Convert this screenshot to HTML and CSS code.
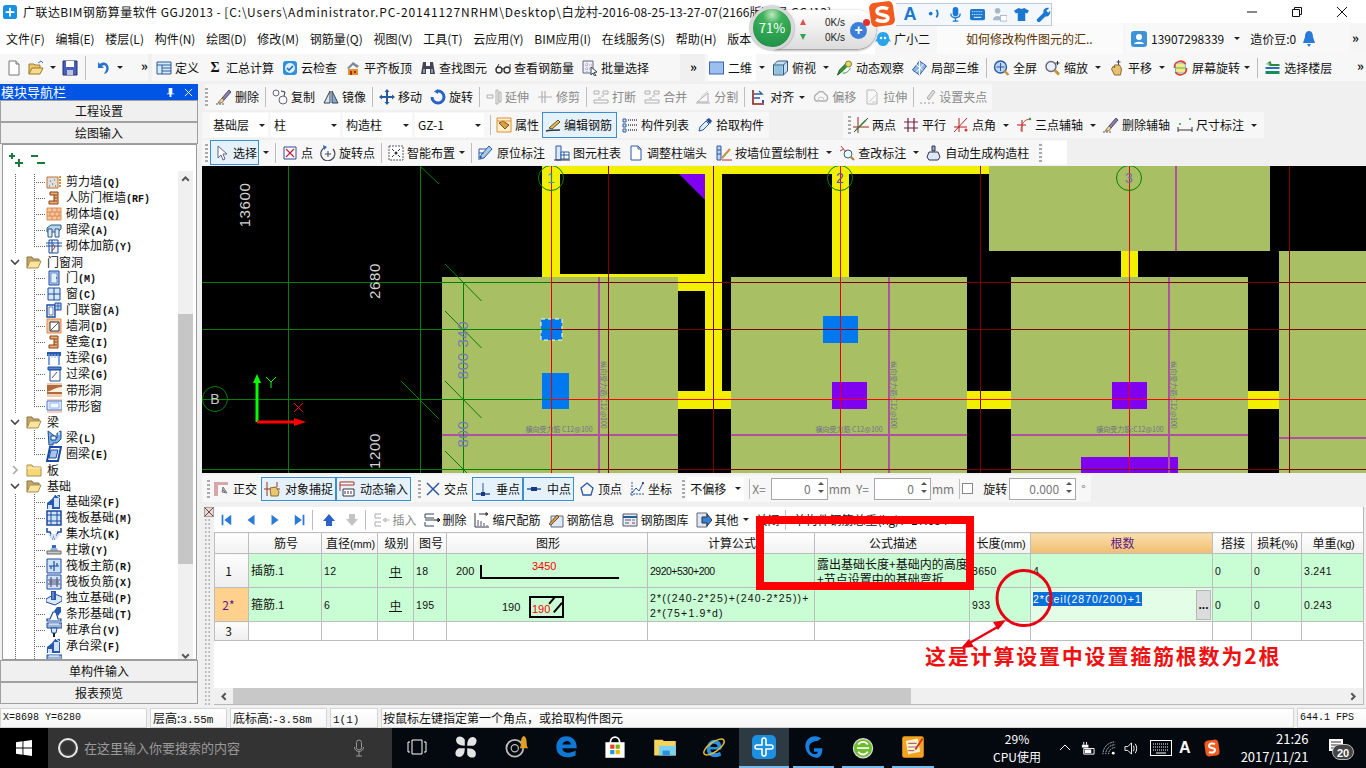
FILE: index.html
```html
<!DOCTYPE html>
<html lang="zh-CN">
<head>
<meta charset="utf-8">
<title>广联达BIM钢筋算量软件 GGJ2013</title>
<link rel="stylesheet" href="styles.css">
</head>
<body>
<svg class="defs" width="0" height="0">
<defs>
<symbol id="doc" viewBox="0 0 16 16"><path d="M3 1h7l3 3v11H3z" fill="#fff" stroke="#777"/><path d="M10 1v3h3" fill="#ddd" stroke="#777"/></symbol>
<symbol id="open" viewBox="0 0 16 16"><path d="M1 14V4h5l1 1h5v3" fill="#e8c878" stroke="#a07820"/><path d="M1 14l3-6h11l-3 6z" fill="#f6dc90" stroke="#a07820"/><path d="M10 3l3-2 2 2" fill="none" stroke="#3a70c0"/></symbol>
<symbol id="save" viewBox="0 0 16 16"><path d="M1 1h14v14H1z" fill="#4a5fb8" stroke="#223070"/><path d="M4 1h8v6H4z" fill="#fff"/><path d="M5 10h6v5H5z" fill="#bcc4e0"/></symbol>
<symbol id="undo" viewBox="0 0 16 16"><path d="M3 2v6h6L7 6c3-2 5 1 4 4l-2 4c5-1 6-7 3-10-2-2-5-2-7 0z" fill="#2a72d0"/></symbol>
<symbol id="def" viewBox="0 0 16 16"><path d="M1 2h14v12H1z" fill="#dbe8f6" stroke="#25609a"/><path d="M1 5h14M6 5v9M6 8h9M6 11h9" stroke="#25609a"/></symbol>
<symbol id="cloud" viewBox="0 0 16 16"><rect x="1" y="1" width="14" height="14" rx="3" fill="#2f8fe0"/><circle cx="8" cy="8" r="5" fill="#dcefff"/><path d="M5 8l2 2 4-4" fill="none" stroke="#1d6fc0" stroke-width="1.6"/></symbol>
<symbol id="flat" viewBox="0 0 16 16"><path d="M2 8l6-6 6 4-2 2-4-3-4 4z" fill="#7a8a9a"/><path d="M3 9h10v6H3z" fill="#e89030"/><path d="M5 11h2v4H5zM9 11h2v2H9z" fill="#a03010"/></symbol>
<symbol id="binoc" viewBox="0 0 16 16"><path d="M3 2h3v4h4V2h3l2 12h-5V9H6v5H1z" fill="#445"/><path d="M3 9h2v4H3zM11 9h2v4h-2z" fill="#89a"/></symbol>
<symbol id="glasses" viewBox="0 0 16 16"><circle cx="4" cy="10" r="3" fill="none" stroke="#333" stroke-width="1.4"/><circle cx="12" cy="10" r="3" fill="none" stroke="#333" stroke-width="1.4"/><path d="M1 9l3-5M7 9c.6-.6 1.4-.6 2 0M15 9V4" fill="none" stroke="#333"/></symbol>
<symbol id="batch" viewBox="0 0 16 16"><path d="M1 1h10v12H1z" fill="#eef" stroke="#667"/><path d="M1 5h10M1 9h10M5 1v12" stroke="#99a" stroke-dasharray="1 1"/><path d="M9 7l6 5-3 .5 2 3-1.500 .5-1.500-3-2 2z" fill="#fff" stroke="#345"/></symbol>
<symbol id="v2d" viewBox="0 0 16 16"><rect x="1" y="2" width="14" height="12" fill="#9dbfee" stroke="#3766b8"/></symbol>
<symbol id="top" viewBox="0 0 16 16"><path d="M1 5l4-4h10v10l-4 4H1z" fill="#c8e0f0" stroke="#2a5a80"/><path d="M1 5h10v10M11 5l4-4" fill="none" stroke="#2a5a80"/><path d="M2 6h8v8H2z" fill="#8fc0e0"/></symbol>
<symbol id="orbit" viewBox="0 0 16 16"><path d="M1 15l4-3 7-7-2-2-7 7z" fill="#3a9a30" stroke="#1a5a20"/><circle cx="12" cy="4" r="3" fill="#e8e040" stroke="#777"/><path d="M6 13c4 1 7-3 8-5" fill="none" stroke="#3a9a30"/></symbol>
<symbol id="local3d" viewBox="0 0 16 16"><path d="M8 1l7 5-7 9-7-5z" fill="#8fb6e8" stroke="#2a5aa0"/><path d="M4 4l7 6M8 1v14M12 4l-7 8" stroke="#fff"/></symbol>
<symbol id="zoomall" viewBox="0 0 16 16"><circle cx="7" cy="7" r="6" fill="#bcd4f0" stroke="#2a5aa0" stroke-width="1.4"/><path d="M7 3v8M3 7h8" stroke="#2a5aa0"/><path d="M11 11l4 4" stroke="#d09030" stroke-width="2.400"/></symbol>
<symbol id="mag" viewBox="0 0 16 16"><circle cx="6.500" cy="6.500" r="5" fill="#e8f0fa" stroke="#667" stroke-width="1.400"/><path d="M10.500 10.500l4 4" stroke="#c09030" stroke-width="2.600"/><path d="M13 1v4M11 3h4" stroke="#333"/></symbol>
<symbol id="hand" viewBox="0 0 16 16"><path d="M3 9l2-3 1 2V5h5l2 4-1 6H6z" fill="#e8c070" stroke="#8a6a30"/><path d="M10 0v5M8 2h4" stroke="#445"/></symbol>
<symbol id="rot" viewBox="0 0 16 16"><rect x="3" y="3" width="10" height="10" fill="#f4e880" stroke="#7ab0e0"/><path d="M3 8h10" stroke="#50b070"/><path d="M2 8a6 6 0 0 1 11-4M14 8a6 6 0 0 1-11 4" fill="none" stroke="#e04030" stroke-width="1.500"/></symbol>
<symbol id="layers" viewBox="0 0 16 16"><path d="M6 1L1 4l5 2h9V4H7z" fill="#2a8a3a"/><path d="M1 7h14v2H1z" fill="#2a70c0"/><path d="M1 11h14v3H1z" fill="#1a8a60"/><path d="M1 4h4" stroke="#fff"/></symbol>
<symbol id="brush" viewBox="0 0 16 16"><path d="M6 9l7-8 2 2-7 8z" fill="#8a78c8" stroke="#554"/><path d="M6 9l2 2c-1 3-4 3-6 3 1-1 2-3 4-5z" fill="#e8d890" stroke="#865"/><path d="M0 15h9" stroke="#555" stroke-dasharray="2 1"/></symbol>
<symbol id="copy" viewBox="0 0 16 16"><circle cx="4" cy="4" r="3" fill="none" stroke="#667"/><circle cx="11" cy="11" r="4" fill="none" stroke="#667"/><path d="M9 2l4 1-1 4" fill="none" stroke="#334"/></symbol>
<symbol id="mirror" viewBox="0 0 16 16"><path d="M7 2v12H1z" fill="#d8e4f0" stroke="#345"/><path d="M9 2v12h6z" fill="#8aa8d0" stroke="#345"/></symbol>
<symbol id="move" viewBox="0 0 16 16"><path d="M8 0l2.500 3H9v4h4V5.500L16 8l-3 2.500V9H9v4h1.500L8 16l-2.500-3H7V9H3v1.500L0 8l3-2.500V7h4V3H5.500z" fill="#2a5aa0"/></symbol>
<symbol id="rotcw" viewBox="0 0 16 16"><path d="M8 2a6 6 0 1 1-6 6" fill="none" stroke="#2a62c8" stroke-width="3"/><path d="M8 0v5l-4-2.500z" fill="#2a62c8"/></symbol>
<symbol id="g1" viewBox="0 0 16 16"><path d="M1 6h6v3H1zM10 1h2v14h-2zM13 3h2v10h-2z" fill="none" stroke="#b0b0b0"/></symbol>
<symbol id="g2" viewBox="0 0 16 16"><path d="M1 8h14M8 2v12M5 2v12" fill="none" stroke="#b0b0b0" stroke-width="1.200"/></symbol>
<symbol id="g3" viewBox="0 0 16 16"><path d="M1 2h5v3H1zM10 2h5v3h-5zM1 11h14v3H1zM8 7h3M8 9H5" fill="none" stroke="#b0b0b0"/></symbol>
<symbol id="g4" viewBox="0 0 16 16"><path d="M2 13l11-9v9zM1 14h14" fill="none" stroke="#b0b0b0"/><path d="M6 8l7-6" stroke="#ccc"/></symbol>
<symbol id="align" viewBox="0 0 16 16"><path d="M2 1v14h11" fill="none" stroke="#902020" stroke-width="1.600"/><path d="M3 5h8l-3-3M3 9h6" fill="none" stroke="#2a5aa0" stroke-width="1.400"/><path d="M11 11h2v3h-2z" fill="#2a5aa0"/></symbol>
<symbol id="goff" viewBox="0 0 16 16"><path d="M3 12a4 4 0 0 1 1-7 4.500 4.500 0 0 1 8 0 4 4 0 0 1 1 7z" fill="none" stroke="#b0b0b0" stroke-width="1.400"/><path d="M5 11a3 3 0 0 1 6 0" fill="none" stroke="#c8c8c8"/></symbol>
<symbol id="gstr" viewBox="0 0 16 16"><path d="M3 1h7l3 3v11H3z" fill="#f8f8f8" stroke="#b8b8b8"/><path d="M5 13l7-7M8 13h5" stroke="#ccc"/></symbol>
<symbol id="ggrip" viewBox="0 0 16 16"><path d="M7 9l6-8 2 2-6 8z" fill="#ddd" stroke="#aaa"/><path d="M0 14h2M4 14h2M8 14h2M12 14h2" stroke="#999"/></symbol>
<symbol id="prop" viewBox="0 0 16 16"><path d="M1 1h14v14H1z" fill="#fff0d0" stroke="#e09030"/><path d="M3 6l4-2 6 4-4 4z" fill="#d8a040" stroke="#805020"/><path d="M1 4h14" stroke="#e09030"/></symbol>
<symbol id="edit" viewBox="0 0 16 16"><path d="M1 14c4-1 9-1 14-1" stroke="#333" stroke-width="1.500" fill="none"/><path d="M4 11l9-8 2 2-8 7z" fill="#e8b840" stroke="#554"/></symbol>
<symbol id="list" viewBox="0 0 16 16"><path d="M1 2h3v3H1zM1 7h3v3H1zM1 12h3v3H1z" fill="#dde8f8" stroke="#2a5aa0"/><path d="M6 3h9M6 8h9M6 13h9" stroke="#445" stroke-dasharray="1 1" stroke-width="1.600"/></symbol>
<symbol id="pick" viewBox="0 0 16 16"><path d="M2 14l1-4 6-6 3 3-6 6z" fill="#dfeefa" stroke="#2a5aa0"/><path d="M9 3l3-2 3 3-2 3z" fill="#2a4a9a"/></symbol>
<symbol id="twopts" viewBox="0 0 16 16"><path d="M1 15L15 1M5 0v16M0 10h16" stroke="#a02020" fill="none"/><path d="M3 13l10-10" stroke="#308030" stroke-width="1.600"/></symbol>
<symbol id="para" viewBox="0 0 16 16"><path d="M5 1v14M11 1v14M1 5h14M1 11h14" stroke="#702040" fill="none" stroke-width="1.200"/></symbol>
<symbol id="ang" viewBox="0 0 16 16"><path d="M1 15L14 1M6 1v14M1 10h13" stroke="#b02020" fill="none"/><circle cx="13" cy="13" r="1.500" fill="#e03030"/></symbol>
<symbol id="arc3" viewBox="0 0 16 16"><path d="M1 8h9M6 15V3" stroke="#a02020" fill="none"/><path d="M5 14c0-8 4-12 10-12" stroke="#e04030" fill="none"/><circle cx="14" cy="2" r="1.200" fill="#30a030"/></symbol>
<symbol id="dim" viewBox="0 0 16 16"><path d="M1 10v5M15 10v5M1 13h14" stroke="#333" fill="none"/><circle cx="3" cy="7" r="1" fill="#30a030"/><circle cx="13" cy="2" r="1" fill="#30a030"/></symbol>
<symbol id="cur" viewBox="0 0 16 16"><path d="M4 1v12l3-3 2 5 2-1-2-5h4z" fill="#fff" stroke="#667"/></symbol>
<symbol id="pt" viewBox="0 0 16 16"><path d="M2 2h12v12H2z" fill="#fff" stroke="#334a90"/><path d="M4 4l8 8M12 4l-8 8" stroke="#c02040" stroke-width="1.200"/></symbol>
<symbol id="rotpt" viewBox="0 0 16 16"><path d="M13 4a7 7 0 1 1-7-2" fill="none" stroke="#445" stroke-width="1.200"/><path d="M3 0l4 2-3 3z" fill="#2a62c8"/><path d="M8 6v6M5 9h6" stroke="#445"/></symbol>
<symbol id="smart" viewBox="0 0 16 16"><path d="M1 1h14v14H1z" fill="#fff" stroke="#556" stroke-dasharray="2 1"/><path d="M4 4l2 2M12 4l-2 2M4 12l2-2M12 12l-2-2" stroke="#333"/><circle cx="8" cy="8" r="1.500" fill="#234"/></symbol>
<symbol id="inplace" viewBox="0 0 16 16"><path d="M1 15V4h9" fill="none" stroke="#2a5aa0"/><path d="M2 14l1-4 8-9 3 3-8 9z" fill="#a8c8e8" stroke="#2a5aa0"/><path d="M1 8h5M1 12h3" stroke="#2a5aa0"/></symbol>
<symbol id="coltab" viewBox="0 0 16 16"><path d="M2 1h5v14H2z" fill="#dde8f8" stroke="#2a5aa0"/><path d="M7 7h8v7H7z" fill="#fff" stroke="#2a5aa0"/><path d="M7 10h8M10 7v7" stroke="#2a5aa0"/><path d="M0 15h16" stroke="#333"/></symbol>
<symbol id="adj" viewBox="0 0 16 16"><path d="M3 1h7l3 3v11H3z" fill="#fff" stroke="#2a5aa0"/><path d="M10 1v3h3" fill="none" stroke="#2a5aa0"/></symbol>
<symbol id="bywall" viewBox="0 0 16 16"><path d="M1 1h4v14H1z" fill="#c0d0f0" stroke="#2a5aa0"/><path d="M1 5h4M1 9h4" stroke="#2a5aa0"/><path d="M6 13l8-9" stroke="#c89040" stroke-width="2"/><path d="M6 15h10" stroke="#c02020"/></symbol>
<symbol id="chk" viewBox="0 0 16 16"><circle cx="9" cy="9" r="4" fill="#dff" stroke="#556"/><path d="M12 12l3 3" stroke="#b08030" stroke-width="2"/><path d="M2 1l5 6M1 6l4-2" stroke="#c04040"/></symbol>
<symbol id="auto" viewBox="0 0 16 16"><path d="M6 1h3v5H6z" fill="#8ab0e0" stroke="#334"/><path d="M3 7h9l2 5-2 3H3l-2-3z" fill="#dde8f8" stroke="#334"/></symbol>
<symbol id="ortho" viewBox="0 0 16 16"><path d="M0 1h14v3H4v11H0z" fill="#d8a8a8"/><path d="M8 8l4 4M9 6l4 6-5-1z" fill="#bbb" stroke="#778"/></symbol>
<symbol id="snap" viewBox="0 0 16 16"><path d="M3 1v14M13 1v5M0 8h16" stroke="#a03020" fill="none"/><path d="M6 7l6-1 3 5-1 4H7z" fill="#e8c870" stroke="#8a6a30"/></symbol>
<symbol id="dyn" viewBox="0 0 16 16"><path d="M1 1h14v3H1z" fill="#fff" stroke="#a03020"/><path d="M1 4v6" stroke="#a03020"/><path d="M4 8h11v7H4z" fill="#fff" stroke="#334"/><path d="M6 13v-3M9 13v-3M12 13v-3" stroke="#334"/></symbol>
<symbol id="cross" viewBox="0 0 16 16"><path d="M2 2l12 12M14 2L2 14" stroke="#2a5aa0" stroke-width="1.500"/></symbol>
<symbol id="perp" viewBox="0 0 16 16"><path d="M1 13h14" stroke="#2a5aa0" stroke-width="1.500"/><path d="M8 2v11" stroke="#2a5aa0"/><rect x="6" y="11" width="4" height="4" fill="#1a3a80"/></symbol>
<symbol id="mid" viewBox="0 0 16 16"><path d="M1 8h14" stroke="#2a5aa0" stroke-width="1.500"/><rect x="5" y="6" width="6" height="4" fill="#1a3a80"/></symbol>
<symbol id="vert" viewBox="0 0 16 16"><path d="M8 2l6 5-2 7H4L2 7z" fill="none" stroke="#2a5aa0" stroke-width="1.300"/></symbol>
<symbol id="coord" viewBox="0 0 16 16"><path d="M1 13h14M3 15V1" stroke="#2a5aa0" fill="none" stroke-dasharray="2 1"/><path d="M3 12l4-5 3 3 4-8" stroke="#2a5aa0" fill="none"/><circle cx="14" cy="2" r="1" fill="#223"/></symbol>
<symbol id="first" viewBox="0 0 16 16"><path d="M3 2h2v12H3zM14 2v12L6 8z" fill="#2a7ad8"/></symbol>
<symbol id="prev" viewBox="0 0 16 16"><path d="M12 2v12L4 8z" fill="#2a7ad8"/></symbol>
<symbol id="next" viewBox="0 0 16 16"><path d="M4 2v12l8-6z" fill="#2a7ad8"/></symbol>
<symbol id="last" viewBox="0 0 16 16"><path d="M11 2h2v12h-2zM2 2v12l8-6z" fill="#2a7ad8"/></symbol>
<symbol id="up" viewBox="0 0 16 16"><path d="M8 2l6 7h-3v5H5V9H2z" fill="#2a62c8"/></symbol>
<symbol id="dn" viewBox="0 0 16 16"><path d="M8 14l6-7h-3V2H5v5H2z" fill="#c4c4c4"/></symbol>
<symbol id="ins" viewBox="0 0 16 16"><path d="M1 2h6M1 2v4M1 10h6M1 10v4h6M1 6h6" stroke="#aaa" fill="none"/><path d="M9 8h7M9 8l3-2v4z" stroke="#bbb" fill="none"/></symbol>
<symbol id="del" viewBox="0 0 16 16"><path d="M1 2h9M1 8h9M1 14h9M1 2v4h9M1 10v4" stroke="#345" fill="none"/><path d="M10 8h6l-2-2v4l2-2" stroke="#111" fill="none"/></symbol>
<symbol id="scale" viewBox="0 0 16 16"><path d="M1 1v14h14" stroke="#334" fill="none"/><path d="M4 14V8M7 14V9M10 14v-3M13 14v-1" stroke="#556" fill="none"/><path d="M5 2h9l-2-1.500v3L14 2" stroke="#334" fill="none"/></symbol>
<symbol id="info" viewBox="0 0 16 16"><path d="M3 4h12v11H3z" fill="#dde8f8" stroke="#667"/><path d="M1 12l8-9 2 2-8 8z" fill="#d8a040" stroke="#654"/></symbol>
<symbol id="lib" viewBox="0 0 16 16"><path d="M1 2h14v12H1z" fill="#e8eef8" stroke="#556"/><path d="M1 5h14" stroke="#2a5aa0" stroke-width="2"/><path d="M3 8h6M3 11h4" stroke="#556"/><path d="M10 11h3" stroke="#c02020"/><path d="M10 8h3" stroke="#30a030"/></symbol>
<symbol id="other" viewBox="0 0 16 16"><path d="M1 1h10v14H1z" fill="#e0e6f0" stroke="#667"/><path d="M6 5h5V2l5 6-5 6v-3H6z" fill="#3a80d0" stroke="#234"/></symbol>
<symbol id="fopen" viewBox="0 0 16 16"><path d="M1 14V3h5l1 2h6v2" fill="#c8a868" stroke="#8a7040"/><path d="M1 14l3-7h11l-3 7z" fill="#f8e4a0" stroke="#a89050"/></symbol>
<symbol id="fold" viewBox="0 0 16 16"><path d="M1 3h5l1 2h8v9H1z" fill="#f6d878" stroke="#a89050"/><path d="M1 6h14" stroke="#fff3c0"/></symbol>
<symbol id="twall" viewBox="0 0 16 16"><path d="M1 3h11v11H1z" fill="#ddd" stroke="#c07030"/><path d="M3 12h1M6 10h1M9 12h1M4 7h1M8 6h1" stroke="#888" stroke-width="1.500"/><path d="M14 2v12" stroke="#e09030" stroke-dasharray="2 1" stroke-width="2"/></symbol>
<symbol id="tzj" viewBox="0 0 16 16"><path d="M4 2h8v12H3v-3h5V5H4z" fill="#e8b078" stroke="#904010"/><path d="M8 5h3M8 8h3M8 11h3" stroke="#904010"/></symbol>
<symbol id="tbrick" viewBox="0 0 16 16"><path d="M1 2h14v12H1z" fill="#f0c8a8" stroke="#e08848"/><path d="M1 6h14M1 10h14M6 2v4M11 2v4M4 6v4M9 6v4M13 6v4M6 10v4M11 10v4" stroke="#e08848"/></symbol>
<symbol id="tbeam" viewBox="0 0 16 16"><path d="M1 6l4-3h10v4l-3 3H1z" fill="#b8d4ec" stroke="#2a5a80"/><path d="M2 7h4v8H2zM9 7h4v8H9z" fill="#dfeaf4" stroke="#2a5a80"/></symbol>
<symbol id="taddb" viewBox="0 0 16 16"><path d="M3 2h9v13H3z" fill="#eef4fc" stroke="#1a4aa0"/><path d="M0 5h16M0 8h16M6 2v13" stroke="#1a4aa0"/><path d="M7 6l2 3-3 4" stroke="#a04020" fill="none"/></symbol>
<symbol id="tdoor" viewBox="0 0 16 16"><path d="M3 1h10v14H3z" fill="#b0ccf0" stroke="#1a4aa0"/><path d="M5 3h6v10H5z" fill="#e4effa" stroke="#1a4aa0" stroke-width=".5"/><path d="M10 8h1" stroke="#123"/></symbol>
<symbol id="twin" viewBox="0 0 16 16"><path d="M2 2h12v12H2z" fill="#d8e8fa" stroke="#1a4aa0"/><path d="M8 2v12M2 8h12" stroke="#1a4aa0"/></symbol>
<symbol id="tdw" viewBox="0 0 16 16"><path d="M1 3h8v12H1z" fill="#fff" stroke="#1a4aa0" stroke-width="1.400"/><path d="M9 1h6v7H9z" fill="#b8d0f0" stroke="#1a4aa0"/><path d="M12 1v7M9 4h6M3 5h4v8H3z" stroke="#1a4aa0" fill="none" stroke-width=".7"/></symbol>
<symbol id="thole" viewBox="0 0 16 16"><path d="M1 1h14v14H1z" fill="#f0c8a8" stroke="#e08848"/><path d="M4 4h9v9H4z" fill="#fff" stroke="#333"/><path d="M4 13l9-9" stroke="#555"/></symbol>
<symbol id="tlin" viewBox="0 0 16 16"><path d="M1 2h14v4H1z" fill="#2a5ab0"/><path d="M3 6v9M13 6v9" stroke="#7aa0e0" stroke-width="2"/><path d="M3 4v4M6 4v4M9 4v4M12 4v4" stroke="#9ab4e8"/></symbol>
<symbol id="tlin2" viewBox="0 0 16 16"><path d="M2 1h13v3H2z" fill="#5a88d0" stroke="#1a4aa0"/><path d="M4 4h10v11H4z" fill="#fff" stroke="#1a4aa0"/><path d="M6 12l5-6" stroke="#556"/></symbol>
<symbol id="tsh" viewBox="0 0 16 16"><path d="M1 1h15v14H1z" fill="#f0cdb0"/><path d="M1 3h15v9H1z" fill="#b06a40"/><path d="M1 10c5-2 10-5 15-5v5z" fill="#fff0e0"/></symbol>
<symbol id="tsw" viewBox="0 0 16 16"><path d="M1 1h15v14H1z" fill="#f5d0c0"/><path d="M1 3h15v9H1z" fill="#dde8fa" stroke="#4a7ad0"/><path d="M4 5h9v5H4z" fill="#f4f8ff" stroke="#9ab4e8"/></symbol>
<symbol id="tbl" viewBox="0 0 16 16"><path d="M2 1l9 7v-5l4-2v8l-4 4H7v2H3z" fill="#7ab0e4" stroke="#1a4a90"/><path d="M9 2l4 0v3" fill="none" stroke="#fff"/><path d="M5 6h5v4H5z" fill="#eaf4fc" stroke="#1a4a90"/></symbol>
<symbol id="tring" viewBox="0 0 16 16"><path d="M4 1h11l-3 14H1z" fill="#fff" stroke="#1a4aa0" stroke-width="2"/><path d="M5 4h7l-2 8H3z" fill="#a8c4ec" stroke="#1a4aa0"/></symbol>
<symbol id="tfb" viewBox="0 0 16 16"><path d="M1 15V9l5-4 3-4 5 0v14z" fill="#2a5ab0"/><path d="M8 4h5v9H8zM2 11h4v4H2z" fill="#cfe2f8"/><path d="M10 1l4 3" stroke="#fff"/></symbol>
<symbol id="traft" viewBox="0 0 16 16"><path d="M1 1h14v14H1z" fill="#cfe2f8" stroke="#1a4aa0" stroke-width="1.500"/><path d="M1 5h14M1 11h14M5 1v14M11 1v14" stroke="#1a4aa0"/></symbol>
<symbol id="tpit" viewBox="0 0 16 16"><path d="M1 2v4h3l2 5h4l2-5h3V2" fill="none" stroke="#1a4aa0" stroke-width="1.500"/><path d="M2 8c2 3 3 6 6 6s4-3 6-6" fill="#cfe2f8"/><path d="M4 9h1M7 11h1M10 9h1M6 13h3" stroke="#557" stroke-dasharray="1 1"/></symbol>
<symbol id="tpier" viewBox="0 0 16 16"><path d="M6 3h4v3H6z" fill="#3a6ac0"/><path d="M5 6h6l1 3H4z" fill="#9ab4d8"/><path d="M1 9h14v3H1z" fill="#c8c8c8" stroke="#666"/></symbol>
<symbol id="trm" viewBox="0 0 16 16"><path d="M1 1h14v14H1z" fill="#cfe2f8" stroke="#1a4aa0"/><path d="M8 3v10M3 8h10M5 8v3M11 8V5" stroke="#1a4aa0" stroke-width="1.200"/></symbol>
<symbol id="trn" viewBox="0 0 16 16"><path d="M1 1h14v14H1z" fill="#cfe2f8" stroke="#1a4aa0"/><path d="M2 6h12M2 10h12M5 3v10M11 3v10M3 8h10" stroke="#557" stroke-width="1.200"/></symbol>
<symbol id="tind" viewBox="0 0 16 16"><path d="M0 9l9-5 7 3v4l-7 4-9-3z" fill="#dbe8f8" stroke="#1a4aa0"/><path d="M5 1h5v9H5z" fill="#2a5ab0"/><path d="M7 2v7" stroke="#9ab4e8"/></symbol>
<symbol id="tstr" viewBox="0 0 16 16"><path d="M7 6h3l2 7h3v2H1v-2h3z" fill="#fff" stroke="#1a4aa0" stroke-width="1.200"/><path d="M8 5l3-4 4 0v5l-3 4z" fill="#2a5ab0"/></symbol>
<symbol id="tpile" viewBox="0 0 16 16"><path d="M1 1h15v5H1z" fill="#9ab4d8" stroke="#1a4aa0"/><path d="M3 2h10" stroke="#fff"/><path d="M5 6h6l-1 5H6z" fill="#dbe8f8" stroke="#1a4aa0"/><path d="M7 11h2v4H7z" fill="#123"/></symbol>
<symbol id="plus2" viewBox="0 0 16 16"><path d="M1 4h2V2h2v2h2v2H5v2H3V6H1z" fill="#1a7a3a"/><path d="M7 11h3V8h2v3h3v2h-3v3h-2v-3H7z" fill="#1a7a3a"/></symbol>
<symbol id="minus2" viewBox="0 0 16 16"><path d="M1 4h7v2H1zM7 11h8v2H7z" fill="#1a7a3a"/></symbol>
</defs>
</svg>

<div class="app">
  <header class="title">
    <svg class="logo" viewBox="0 0 16 16"><rect width="16" height="16" rx="3" fill="#1b8fe0"/><path d="M7 3h2v4h4v2H9v4H7V9H3V7h4z" fill="#fff"/></svg>
    <span class="title-text"><span class="t-pre">广联达BIM钢筋算量软件 GGJ2013 - </span><span class="t-path">[C:\Users\Administrator.PC-20141127NRHM\Desktop\</span>白龙村-2016-08-25-13-27-07(2166版) 1层.GCJ13]</span>
    <div class="winbtns">
      <span class="wb"><svg viewBox="0 0 12 12"><path d="M1 6h10" stroke="#111"/></svg></span>
      <span class="wb"><svg viewBox="0 0 12 12"><path d="M1.500 3.500h7v7h-7zM3.500 3.500v-2h7v7h-2" fill="none" stroke="#111"/></svg></span>
      <span class="wb"><svg viewBox="0 0 12 12"><path d="M1 1l10 10M11 1L1 11" stroke="#111"/></svg></span>
    </div>
  </header>

  <nav class="menu">
    <span>文件(F)</span><span>编辑(E)</span><span>楼层(L)</span><span>构件(N)</span><span>绘图(D)</span><span>修改(M)</span><span>钢筋量(Q)</span><span>视图(V)</span><span>工具(T)</span><span>云应用(Y)</span><span>BIM应用(I)</span><span>在线服务(S)</span><span>帮助(H)</span><span>版本</span>
    <div class="menu-right">
      <svg class="qq" viewBox="0 0 16 16"><path d="M8 1c4 0 6 3 6 6l2 4-2-1c-1 3-3 5-6 5s-5-2-6-5l-2 1 2-4c0-3 2-6 6-6z" fill="#2aa5ea"/><circle cx="6" cy="7" r="1.200" fill="#fff"/><circle cx="10" cy="7" r="1.200" fill="#fff"/></svg>
      <span class="gxe">广小二</span>
      <span class="ask">如何修改构件图元的汇..</span>
      <span class="userbox">
        <svg class="ic" viewBox="0 0 16 16"><rect width="16" height="16" rx="3" fill="#3d93d8"/><circle cx="8" cy="6" r="3" fill="#fff"/><path d="M3 13c1-3 9-3 10 0z" fill="#fff"/></svg>
        <span>13907298339</span><i class="ar"></i><span class="beans">造价豆:0</span>
        <svg class="bell" viewBox="0 0 14 18"><path d="M7 1c3 0 4 3 4 6l2 6H1l2-6c0-3 1-6 4-6z" fill="#2a78d8"/><path d="M5 14h4l-2 3z" fill="#2a78d8"/></svg>
      </span>
      <span class="more">»</span>
    </div>
  </nav>

  <div class="bar bar1">
    <div class="tb tb1a">
      <svg class="ic"><use href="#doc"/></svg><svg class="ic"><use href="#open"/></svg><i class="ar"></i><svg class="ic"><use href="#save"/></svg><i class="sep tall"></i><svg class="ic"><use href="#undo"/></svg><i class="ar"></i><span class="more">»</span>
    </div>
    <div class="tb tb1b">
      <span class="it"><svg class="ic"><use href="#def"/></svg>定义</span>
      <span class="it"><b class="sigma">Σ</b>汇总计算</span>
      <span class="it"><svg class="ic"><use href="#cloud"/></svg>云检查</span>
      <span class="it"><svg class="ic"><use href="#flat"/></svg>平齐板顶</span>
      <span class="it"><svg class="ic"><use href="#binoc"/></svg>查找图元</span>
      <span class="it"><svg class="ic"><use href="#glasses"/></svg>查看钢筋量</span>
      <span class="it"><svg class="ic"><use href="#batch"/></svg>批量选择</span>
    </div>
    <span class="more more1">»</span>
    <div class="tb tb1c">
      <span class="it pressed"><svg class="ic"><use href="#v2d"/></svg>二维</span><i class="ar"></i>
      <span class="it"><svg class="ic"><use href="#top"/></svg>俯视</span><i class="ar"></i>
      <span class="it"><svg class="ic"><use href="#orbit"/></svg>动态观察</span>
      <span class="it"><svg class="ic"><use href="#local3d"/></svg>局部三维</span><i class="sep"></i>
      <span class="it"><svg class="ic"><use href="#zoomall"/></svg>全屏</span>
      <span class="it"><svg class="ic"><use href="#mag"/></svg>缩放</span><i class="ar"></i>
      <span class="it"><svg class="ic"><use href="#hand"/></svg>平移</span><i class="ar"></i>
      <span class="it"><svg class="ic"><use href="#rot"/></svg>屏幕旋转</span><i class="ar near"></i><i class="sep"></i>
      <span class="it"><svg class="ic"><use href="#layers"/></svg>选择楼层</span>
      <span class="more pushr">»</span>
    </div>
  </div>

  <div class="work">
    <aside class="side">
      <div class="side-head"><span>模块导航栏</span><span class="side-ctl"><svg viewBox="0 0 10 12"><path d="M3 1h4v6h2v1H6v3H4V8H1V7h2z" fill="#fff"/></svg><svg viewBox="0 0 10 10"><path d="M1 1l8 8M9 1L1 9" stroke="#fff"/></svg></span></div>
      <button class="side-btn">工程设置</button>
      <button class="side-btn">绘图输入</button>
      <div class="tree-box">
        <div class="tree-tools"><svg><use href="#plus2"/></svg><svg><use href="#minus2"/></svg></div>
        <div class="tree-scroll">
          <ul class="tree">
            <li class="node"><svg><use href="#twall"/></svg><span>剪力墙<em>(Q)</em></span></li>
            <li class="node"><svg><use href="#tzj"/></svg><span>人防门框墙<em>(RF)</em></span></li>
            <li class="node"><svg><use href="#tbrick"/></svg><span>砌体墙<em>(Q)</em></span></li>
            <li class="node"><svg><use href="#tbeam"/></svg><span>暗梁<em>(A)</em></span></li>
            <li class="node lastn"><svg><use href="#taddb"/></svg><span>砌体加筋<em>(Y)</em></span></li>
            <li class="grp"><svg class="chev" viewBox="0 0 10 10"><path d="M1 3l4 4 4-4" fill="none" stroke="#444" stroke-width="1.600"/></svg><svg class="fo"><use href="#fopen"/></svg><span>门窗洞</span></li>
            <li class="node"><svg><use href="#tdoor"/></svg><span>门<em>(M)</em></span></li>
            <li class="node"><svg><use href="#twin"/></svg><span>窗<em>(C)</em></span></li>
            <li class="node"><svg><use href="#tdw"/></svg><span>门联窗<em>(A)</em></span></li>
            <li class="node"><svg><use href="#thole"/></svg><span>墙洞<em>(D)</em></span></li>
            <li class="node"><svg><use href="#tzj"/></svg><span>壁龛<em>(I)</em></span></li>
            <li class="node"><svg><use href="#tlin"/></svg><span>连梁<em>(G)</em></span></li>
            <li class="node"><svg><use href="#tlin2"/></svg><span>过梁<em>(G)</em></span></li>
            <li class="node"><svg><use href="#tsh"/></svg><span>带形洞</span></li>
            <li class="node lastn"><svg><use href="#tsw"/></svg><span>带形窗</span></li>
            <li class="grp"><svg class="chev" viewBox="0 0 10 10"><path d="M1 3l4 4 4-4" fill="none" stroke="#444" stroke-width="1.600"/></svg><svg class="fo"><use href="#fopen"/></svg><span>梁</span></li>
            <li class="node"><svg><use href="#tbl"/></svg><span>梁<em>(L)</em></span></li>
            <li class="node lastn"><svg><use href="#tring"/></svg><span>圈梁<em>(E)</em></span></li>
            <li class="grp"><svg class="chev" viewBox="0 0 10 10"><path d="M3 1l4 4-4 4" fill="none" stroke="#aaa" stroke-width="1.600"/></svg><svg class="fo"><use href="#fold"/></svg><span>板</span></li>
            <li class="grp"><svg class="chev" viewBox="0 0 10 10"><path d="M1 3l4 4 4-4" fill="none" stroke="#444" stroke-width="1.600"/></svg><svg class="fo"><use href="#fopen"/></svg><span>基础</span></li>
            <li class="node"><svg><use href="#tfb"/></svg><span>基础梁<em>(F)</em></span></li>
            <li class="node"><svg><use href="#traft"/></svg><span>筏板基础<em>(M)</em></span></li>
            <li class="node"><svg><use href="#tpit"/></svg><span>集水坑<em>(K)</em></span></li>
            <li class="node"><svg><use href="#tpier"/></svg><span>柱墩<em>(Y)</em></span></li>
            <li class="node"><svg><use href="#trm"/></svg><span>筏板主筋<em>(R)</em></span></li>
            <li class="node"><svg><use href="#trn"/></svg><span>筏板负筋<em>(X)</em></span></li>
            <li class="node"><svg><use href="#tind"/></svg><span>独立基础<em>(P)</em></span></li>
            <li class="node"><svg><use href="#tstr"/></svg><span>条形基础<em>(T)</em></span></li>
            <li class="node"><svg><use href="#tpile"/></svg><span>桩承台<em>(V)</em></span></li>
            <li class="node"><svg><use href="#tfb"/></svg><span>承台梁<em>(F)</em></span></li>
            <li class="node"><svg><use href="#tpile"/></svg></li>
          </ul>
          <div class="vscroll">
            <svg class="sa" viewBox="0 0 10 10"><path d="M2 7l3-3 3 3" fill="none" stroke="#555" stroke-width="1.800"/></svg>
            <div class="vthumb"></div>
            <svg class="sa" viewBox="0 0 10 10"><path d="M2 3l3 3 3-3" fill="none" stroke="#555" stroke-width="1.800"/></svg>
          </div>
        </div>
      </div>
      <button class="side-btn">单构件输入</button>
      <button class="side-btn">报表预览</button>
    </aside>

    <main class="main">
      <div class="tb-row row2">
        <div class="tb">
          <i class="grip"></i>
          <span class="it"><svg class="ic"><use href="#brush"/></svg>删除</span><i class="sep"></i>
          <span class="it"><svg class="ic"><use href="#copy"/></svg>复制</span>
          <span class="it"><svg class="ic"><use href="#mirror"/></svg>镜像</span><i class="sep"></i>
          <span class="it"><svg class="ic"><use href="#move"/></svg>移动</span>
          <span class="it"><svg class="ic"><use href="#rotcw"/></svg>旋转</span><i class="sep"></i>
          <span class="it off"><svg class="ic"><use href="#g1"/></svg>延伸</span>
          <span class="it off"><svg class="ic"><use href="#g2"/></svg>修剪</span><i class="sep"></i>
          <span class="it off"><svg class="ic"><use href="#g3"/></svg>打断</span>
          <span class="it off"><svg class="ic"><use href="#g3"/></svg>合并</span>
          <span class="it off"><svg class="ic"><use href="#g4"/></svg>分割</span><i class="sep"></i>
          <span class="it"><svg class="ic"><use href="#align"/></svg>对齐</span><i class="ar near"></i>
          <span class="it off"><svg class="ic"><use href="#goff"/></svg>偏移</span>
          <span class="it off"><svg class="ic"><use href="#gstr"/></svg>拉伸</span><i class="sep"></i>
          <span class="it off"><svg class="ic"><use href="#ggrip"/></svg>设置夹点</span>
        </div>
      </div>

      <div class="tb-row row3">
        <div class="tb r3a">
          <span class="combo c58">基础层<i class="ar"></i></span>
          <span class="combo c69">柱<i class="ar"></i></span>
          <span class="combo c69">构造柱<i class="ar"></i></span>
          <span class="combo c69">GZ-1<i class="ar"></i></span>
          <i class="sep"></i>
          <span class="it"><svg class="ic"><use href="#prop"/></svg>属性</span>
          <span class="it on"><svg class="ic"><use href="#edit"/></svg>编辑钢筋</span>
          <span class="it"><svg class="ic"><use href="#list"/></svg>构件列表</span>
          <span class="it gapl"><svg class="ic"><use href="#pick"/></svg>拾取构件</span>
        </div>
        <div class="tb r3b">
          <i class="grip"></i>
          <span class="it"><svg class="ic"><use href="#twopts"/></svg>两点</span>
          <span class="it"><svg class="ic"><use href="#para"/></svg>平行</span>
          <span class="it"><svg class="ic"><use href="#ang"/></svg>点角</span><i class="ar"></i>
          <span class="it"><svg class="ic"><use href="#arc3"/></svg>三点辅轴</span><i class="ar"></i>
          <span class="it"><svg class="ic"><use href="#brush"/></svg>删除辅轴</span>
          <span class="it"><svg class="ic"><use href="#dim"/></svg>尺寸标注</span><i class="ar"></i>
        </div>
      </div>

      <div class="tb-row row4">
        <div class="tb">
          <i class="grip"></i>
          <span class="it on sel"><svg class="ic"><use href="#cur"/></svg>选择</span><i class="ar"></i><i class="sep"></i>
          <span class="it"><svg class="ic"><use href="#pt"/></svg>点</span>
          <span class="it"><svg class="ic"><use href="#rotpt"/></svg>旋转点</span><i class="sep"></i>
          <span class="it"><svg class="ic"><use href="#smart"/></svg>智能布置</span><i class="ar near"></i><i class="sep"></i>
          <span class="it"><svg class="ic"><use href="#inplace"/></svg>原位标注</span>
          <span class="it m2"><svg class="ic"><use href="#coltab"/></svg>图元柱表</span>
          <span class="it"><svg class="ic"><use href="#adj"/></svg>调整柱端头</span>
          <span class="it m2"><svg class="ic"><use href="#bywall"/></svg>按墙位置绘制柱</span><i class="ar"></i>
          <span class="it"><svg class="ic"><use href="#chk"/></svg>查改标注</span><i class="ar"></i>
          <span class="it"><svg class="ic"><use href="#auto"/></svg>自动生成构造柱</span>
          <i class="grip g-end"></i><i class="blank"></i>
        </div>
      </div>

      <svg class="canvas" viewBox="202 166 1164 307" width="1164" height="307">
        <rect x="202" y="166" width="1164" height="307" fill="#000"/>
        <g fill="#a9bf63">
          <rect x="442" y="277" width="236" height="196"/><rect x="731" y="277" width="236" height="196"/><rect x="1011" y="277" width="237" height="196"/><rect x="1279" y="251" width="87" height="222"/><rect x="989" y="166" width="281" height="85"/>
        </g>
        <g fill="#f2f000">
          <rect x="542" y="166" width="18" height="111"/><rect x="542" y="166" width="447" height="8"/><rect x="560" y="274" width="118" height="3"/><rect x="678" y="274" width="27" height="17"/><rect x="705" y="174" width="17" height="217"/><rect x="678" y="391" width="53" height="18"/><rect x="832" y="174" width="17" height="103"/><rect x="1121" y="251" width="17" height="26"/><rect x="967" y="391" width="44" height="18"/><rect x="1248" y="391" width="31" height="18"/>
        </g>
        <path d="M679 174h26v26z" fill="#8000f0"/>
        <g fill="#0078f0"><rect x="541" y="319" width="21" height="21"/><rect x="542" y="373" width="27" height="36"/><rect x="823" y="316" width="35" height="27"/></g>
        <rect x="541" y="319" width="21" height="21" fill="none" stroke="#fff" stroke-dasharray="4 3"/>
        <g fill="#8000f0"><rect x="832" y="382" width="35" height="27"/><rect x="1112" y="382" width="35" height="27"/><rect x="1081" y="457" width="97" height="16"/></g>
        <g stroke="#b050a0" stroke-width="2" fill="none"><path d="M599 277v196M889 277v196M1169 277v196M1176 166v85M442 435h236M731 435h236M1011 435h237M1279 438h87"/></g>
        <g stroke="#008000" fill="none"><path d="M288.500 166v307M420.500 166v307M202 282.500h349M202 329.500h349M202 399.500h349M202 469.500h349M463.500 282v191"/>
          <path d="M445 264l36.500 37M445 311l36.500 37M445 381l36.500 37M445 451l22 22M420 166l19 18M401 381l38 38"/>
        </g>
        <g stroke="#800000" fill="none"><path d="M551 282.500h815M551 329.500h815M551 469.500h815M608.500 166v307M713.500 166v307M980.500 166v307M1289.500 166v307"/></g>
        <g stroke="#e80000" fill="none"><path d="M551.500 166v307M840.500 166v307M1129.500 166v307"/><path d="M551 399.500h815" stroke="#ff0000"/></g>
        <g fill="none" stroke="#008000"><circle cx="551" cy="178" r="12.500"/><circle cx="840" cy="178" r="12.500"/><circle cx="1129" cy="178" r="12.500"/><circle cx="215" cy="399" r="12.500"/></g>
        <g class="cad-axis"><text x="551" y="183" fill="#3aa0b0">1</text><text x="840" y="183" fill="#5050c0">2</text><text x="1129" y="183" fill="#7070b0">3</text><text x="215" y="404" fill="#c8c8c8">B</text></g>
        <g class="cad-dim">
          <text transform="translate(250 205) rotate(-90)" fill="#d4d4d4">13600</text>
          <text transform="translate(380 281) rotate(-90)" fill="#d4d4d4">2680</text>
          <text transform="translate(380 451) rotate(-90)" fill="#d4d4d4">1200</text>
          <text transform="translate(468 350) rotate(-90)" fill="#7878b0">800 340</text>
          <text transform="translate(468 434) rotate(-90)" fill="#7878b0">800</text>
        </g>
        <g class="cad-small">
          <text x="559" y="432">横向受力筋 C12@100</text><text x="849" y="432">横向受力筋 C12@100</text><text x="1130" y="432">横向受力筋:C12@100</text>
          <text transform="translate(601 395) rotate(90)">纵向受力筋:C12@100</text><text transform="translate(891 395) rotate(90)">纵向受力筋:C12@100</text><text transform="translate(1171 395) rotate(90)">纵向受力筋:C12@100</text>
        </g>
        <path d="M257 422v-42" stroke="#00ff00" stroke-width="3"/><path d="M257 374l4 9h-8z" fill="#00ff00"/>
        <path d="M257 422h40" stroke="#ff0000" stroke-width="3"/><path d="M306 422l-12 4v-8z" fill="#ff0000"/>
        <path d="M266 377l5 5 5-5M271 382v6" stroke="#00ff00" fill="none"/>
        <path d="M294 403l9 9M303 403l-9 9" stroke="#ff0000" fill="none"/>
      </svg>

      <div class="tb-row row5">
        <div class="tb">
          <i class="grip"></i>
          <span class="it"><svg class="ic"><use href="#ortho"/></svg>正交</span>
          <span class="tg-wrap">
            <span class="it on"><svg class="ic"><use href="#snap"/></svg>对象捕捉</span>
            <span class="it on"><svg class="ic"><use href="#dyn"/></svg>动态输入</span>
          </span>
          <i class="grip"></i>
          <span class="it"><svg class="ic"><use href="#cross"/></svg>交点</span>
          <span class="tg-wrap">
            <span class="it on"><svg class="ic"><use href="#perp"/></svg>垂点</span>
            <span class="it on"><svg class="ic"><use href="#mid"/></svg>中点</span>
          </span>
          <span class="it"><svg class="ic"><use href="#vert"/></svg>顶点</span>
          <span class="it m2"><svg class="ic"><use href="#coord"/></svg>坐标</span>
          <i class="grip g-third"></i>
          <span class="combo c57">不偏移<i class="ar"></i></span>
          <i class="sep"></i>
          <span class="lbl">X=</span><span class="spin s58">0<span class="arrows"><i class="up"></i><i class="dn"></i></span></span><span class="lbl">mm</span>
          <span class="lbl">Y=</span><span class="spin s58">0<span class="arrows"><i class="up"></i><i class="dn"></i></span></span><span class="lbl">mm</span>
          <i class="sep"></i><i class="check"></i><span class="rot-l">旋转</span>
          <span class="spin s68">0.000<span class="arrows"><i class="up"></i><i class="dn"></i></span></span><span class="lbl">°</span>
        </div>
      </div>

      <section class="lower">
        <div class="lower-grip">
          <svg class="closex" viewBox="0 0 10 10"><rect width="10" height="10" fill="#ddd" stroke="#667"/><path d="M1 1l8 8M9 1L1 9" stroke="#a03020"/></svg>
          <i class="dots"></i>
        </div>
        <div class="lower-body">
          <div class="grid-bar">
            <svg class="ic n"><use href="#first"/></svg><svg class="ic n"><use href="#prev"/></svg><svg class="ic n"><use href="#next"/></svg><svg class="ic n"><use href="#last"/></svg><i class="sep"></i>
            <svg class="ic"><use href="#up"/></svg><svg class="ic"><use href="#dn"/></svg><i class="sep"></i>
            <span class="it off"><svg class="ic"><use href="#ins"/></svg>插入</span>
            <span class="it"><svg class="ic"><use href="#del"/></svg>删除</span>
            <span class="it"><svg class="ic"><use href="#scale"/></svg>缩尺配筋</span>
            <span class="it"><svg class="ic"><use href="#info"/></svg>钢筋信息</span>
            <span class="it"><svg class="ic"><use href="#lib"/></svg>钢筋图库</span>
            <span class="it"><svg class="ic"><use href="#other"/></svg>其他</span><i class="ar near"></i>
            <span class="plain">关闭</span><i class="sep"></i><span class="plain">单构件钢筋总重(kg)：17.034</span>
          </div>
          <table class="rebar">
            <colgroup><col class="c1"><col class="c2"><col class="c3"><col class="c4"><col class="c5"><col class="c6"><col class="c7"><col class="c8"><col class="c9"><col class="c10"><col class="c11"><col class="c12"><col class="c13"></colgroup>
            <thead>
              <tr><th></th><th>筋号</th><th>直径<em>(mm)</em></th><th>级别</th><th>图号</th><th>图形</th><th>计算公式</th><th>公式描述</th><th>长度<em>(mm)</em></th><th class="hot">根数</th><th>搭接</th><th>损耗<em>(%)</em></th><th>单重<em>(kg)</em></th></tr>
            </thead>
            <tbody>
              <tr class="r1">
                <th>1</th><td>插筋<em>.1</em></td><td class="bl"><em>12</em></td><td class="ctr"><span class="grade">中</span></td><td><em>18</em></td>
                <td class="shape">
                  <div class="shape1"><span class="n200">200</span><div class="el"><span class="rd">3450</span></div></div>
                </td>
                <td class="f1"><em>2920+530+200</em></td>
                <td class="desc">露出基础长度+基础内的高度<br>+节点设置中的基础弯折</td>
                <td><em>3650</em></td><td><em>4</em></td><td><em>0</em></td><td><em>0</em></td><td><em>3.241</em></td>
              </tr>
              <tr class="r2">
                <th class="cur">2*</th><td>箍筋<em>.1</em></td><td class="bl"><em>6</em></td><td class="ctr"><span class="grade">中</span></td><td><em>195</em></td>
                <td class="shape">
                  <div class="shape2"><span class="n190">190</span><div class="stir"><span class="rd">190</span><i class="h1"></i><i class="h2"></i></div></div>
                </td>
                <td class="two"><em>2*((240-2*25)+(240-2*25))+<br>2*(75+1.9*d)</em></td>
                <td></td>
                <td><em>933</em></td>
                <td class="editing"><div class="edit-wrap"><span class="selected">2*Ceil(2870/200)+1</span><button class="dots3">...</button></div></td>
                <td><em>0</em></td><td><em>0</em></td><td><em>0.243</em></td>
              </tr>
              <tr class="r3"><th>3</th><td></td><td class="bl"></td><td></td><td></td><td></td><td></td><td></td><td></td><td></td><td></td><td></td><td></td></tr>
            </tbody>
          </table>
          <div class="table-fill"></div>
          <div class="hscroll">
            <svg viewBox="0 0 10 10"><path d="M7 2L4 5l3 3" fill="none" stroke="#555" stroke-width="1.800"/></svg>
            <div class="hthumb"></div>
            <svg viewBox="0 0 10 10"><path d="M3 2l3 3-3 3" fill="none" stroke="#555" stroke-width="1.800"/></svg>
          </div>
        </div>
      </section>
    </main>
  </div>

  <footer class="status">
    <span class="st s1">X=8698 Y=6280</span><span class="st s2">层高:<em>3.55m</em></span><span class="st s3">底标高:<em>-3.58m</em></span><span class="st s4"><em>1(1)</em></span><span class="st s5">按鼠标左键指定第一个角点，或拾取构件图元</span><span class="st s6">644.1 FPS</span>
  </footer>

  <div class="taskbar">
    <div class="start"><svg viewBox="0 0 16 16"><path d="M0 2.200l6.500-.9v6.300H0zM7.400 1.200L16 0v7.600H7.400zM0 8.400h6.500v6.300L0 13.800zM7.400 8.400H16V16l-8.600-1.200z" fill="#fff"/></svg></div>
    <div class="search"><i class="ring"></i><span>在这里输入你要搜索的内容</span><svg viewBox="0 0 12 18"><rect x="3.500" y="1" width="5" height="10" rx="2.500" fill="none" stroke="#999"/><path d="M1.500 8c0 6 9 6 9 0M6 13v4M3 17h6" fill="none" stroke="#999"/></svg></div>
    <div class="apps">
      <span class="app-b"><svg viewBox="0 0 20 20"><path d="M5 3h10v14H5zM3 5H1v10h2M17 5h2v10h-2" fill="none" stroke="#fff"/></svg></span>
      <span class="app-b"><svg viewBox="0 0 20 20"><path d="M9 9C3 9 1 6 2 3s6-2 7 1zM11 9c0-6 3-8 6-7s2 6-1 7zM11 11c6 0 8 3 7 6s-6 2-7-1zM9 11c0 6-3 8-6 7s-2-6 1-7z" fill="#e4e4e4"/></svg></span>
      <span class="app-b"><svg viewBox="0 0 20 20"><circle cx="9" cy="11" r="7" fill="none" stroke="#bbb" stroke-width="1.500"/><circle cx="9" cy="11" r="3" fill="none" stroke="#bbb"/><path d="M14 9c0-6 1-8 2.500-8S19 3 19 9l1 2h-7z" fill="#e0a020"/></svg></span>
      <span class="app-b"><svg viewBox="0 0 20 20"><path d="M10 1c6 0 9 4 9 10H7c0 4 6 5 11 2v4c-6 3-16 2-16-7C2 5 5 1 10 1zm-3 7h7c0-4-6-4-7 0z" fill="#0f78d4"/></svg></span>
      <span class="app-b"><svg viewBox="0 0 20 20"><path d="M2 6h16v13H2z" fill="#fff"/><path d="M6 7c0-7 8-7 8 0" fill="none" stroke="#fff" stroke-width="1.500"/><path d="M6 8h3.500v3.500H6z" fill="#e8402a"/><path d="M10.500 8H14v3.500h-3.500z" fill="#7ab800"/><path d="M6 12.500h3.500V16H6z" fill="#1a9ae0"/><path d="M10.500 12.500H14V16h-3.500z" fill="#f6b400"/></svg></span>
      <span class="app-b"><svg viewBox="0 0 20 20"><path d="M1 4h7l1 1h10v12H1z" fill="#f6d45a"/><path d="M5 9h14v8H5z" fill="#7ad0f0"/><path d="M8 13h6v4H8z" fill="#2a90d8"/></svg></span>
      <span class="app-b"><svg viewBox="0 0 20 20"><path d="M10 4c5 0 7 4 6 8H7c0 3 5 4 8 2l1 3c-5 3-12 1-12-5 0-5 3-8 6-8zm-3 6h6c0-3-5-4-6 0z" fill="#2a90e0"/><ellipse cx="10" cy="10" rx="10" ry="4" transform="rotate(-35 10 10)" fill="none" stroke="#e8c030" stroke-width="1.200"/></svg></span>
      <span class="app-b active u"><svg viewBox="0 0 24 24"><rect width="24" height="24" rx="5" fill="#1b8fe0"/><path d="M10 5a2 2 0 0 1 4 0v5h5a2 2 0 0 1 0 4h-5v5a2 2 0 0 1-4 0v-5H5a2 2 0 0 1 0-4h5z" fill="none" stroke="#fff" stroke-width="1.600"/></svg></span>
      <span class="app-b u"><svg viewBox="0 0 20 20"><path d="M11 1c-6 0-9 5-8 10 1 6 7 8 10 8 3-1 4-4 4-8h-7v3h3c0 2-1 2-3 2-3-1-4-3-4-6s3-5 7-5l3-2c-1-1-3-2-5-2z" fill="#1a80e0"/></svg></span>
      <span class="app-b u"><svg viewBox="0 0 20 20"><circle cx="10" cy="11" r="8" fill="#6dbe2d" stroke="#ddd"/><path d="M5 11h10M6 8c2-3 6-3 8 0M6 14c2 3 6 3 8 0" fill="none" stroke="#fff" stroke-width="1.500"/></svg></span>
      <span class="app-b u"><svg viewBox="0 0 20 20"><rect x="1" y="1" width="18" height="18" rx="2" fill="#f4a320"/><path d="M4 5l10-2 2 11-10 2z" fill="#fdf2c8"/><path d="M6 7h7M6 10h7M6 13h5" stroke="#a68"/><path d="M12 12l6-9" stroke="#d03020" stroke-width="1.500"/></svg></span>
    </div>
    <div class="tray">
      <div class="cpu"><span>29%</span><span>CPU使用</span></div>
      <svg class="t-caret" viewBox="0 0 12 12"><path d="M1 8l5-5 5 5" fill="none" stroke="#fff"/></svg>
      <svg class="t-i" viewBox="0 0 16 16"><path d="M4 1v3M7 1v3" stroke="#fff"/><path d="M2 4h7v3H2z" fill="#fff"/><path d="M4 8h11v6H4z" fill="none" stroke="#fff"/><path d="M5 9h7v4H5z" fill="#fff"/></svg>
      <svg class="t-i" viewBox="0 0 16 16"><path d="M1 14a13 13 0 0 1 13-13M4 14A10 10 0 0 1 14 4M7 14a7 7 0 0 1 7-7" fill="none" stroke="#ddd" stroke-dasharray="1.500 1"/><circle cx="12" cy="13" r="1.500" fill="#fff"/></svg>
      <svg class="t-i" viewBox="0 0 16 16"><path d="M1 6h3l4-4v12l-4-4H1z" fill="none" stroke="#fff"/><path d="M10 5c1 2 1 4 0 6M12 3c2 3 2 7 0 10" fill="none" stroke="#fff"/></svg>
      <svg class="t-k" viewBox="0 0 22 16"><rect x=".5" y=".5" width="21" height="15" fill="none" stroke="#fff"/><path d="M3 4h16M3 7h16M3 10h16" stroke="#fff" stroke-dasharray="1 1"/><path d="M6 13h10" stroke="#fff"/></svg>
      <span class="t-a">A</span>
      <svg class="t-s" viewBox="0 0 16 18"><rect x="1" y="1" width="14" height="16" rx="4" fill="#f25a1f" transform="rotate(-8 8 9)"/><path d="M11 5c-2-1-6-1-6 2s6 1 6 4-4 3-6 2" fill="none" stroke="#fff" stroke-width="2"/></svg>
      <div class="clock"><span>21:26</span><span>2017/11/21</span></div>
      <div class="notif"><svg viewBox="0 0 16 16"><path d="M1 1h14v12H1z" fill="#fff"/><path d="M3 4h10M3 7h10M3 10h7" stroke="#333"/></svg><b>20</b></div>
    </div>
  </div>

  <!-- floating overlays -->
  <div class="speed">
    <div class="gauge">71%</div>
    <div class="speed-r"><span class="sp"><i class="tup"></i></span><span class="sv">0K/s</span><span class="sp"><i class="tdn"></i></span><span class="sv">0K/s</span></div>
    <div class="plus">+</div><i class="reddot"></i>
  </div>
  <div class="sogou">
    <svg class="s-logo" viewBox="0 0 28 28"><rect x="2" y="2" width="24" height="24" rx="5" fill="#f25a1f" transform="rotate(-8 14 14)"/><path d="M20 9c-3-2-11-2-11 2.500S20 14 20 18s-8 4-12 1.500" fill="none" stroke="#fff" stroke-width="3.500"/></svg>
    <div class="s-bar">
      <span class="s-a">A</span>
      <svg viewBox="0 0 16 16"><circle cx="5" cy="7" r="2" fill="#1a78d0"/><path d="M11 3c2 2 2 6 0 8" fill="none" stroke="#1a78d0" stroke-width="2"/></svg>
      <svg viewBox="0 0 16 16"><rect x="5" y="0" width="6" height="10" rx="3" fill="#1a78d0"/><path d="M3 7c0 6 10 6 10 0M8 12v3M5 15h6" fill="none" stroke="#1a78d0" stroke-width="1.400"/></svg>
      <svg viewBox="0 0 16 16"><rect x="0" y="2" width="16" height="12" rx="2" fill="#1a78d0"/><path d="M2 5h12M2 8h12" stroke="#fff" stroke-dasharray="1 1"/><path d="M4 11h8" stroke="#fff"/></svg>
      <svg viewBox="0 0 16 16"><circle cx="6" cy="4" r="3" fill="#a8b8c8"/><path d="M1 14c0-6 10-6 10 0z" fill="#a8b8c8"/><rect x="9" y="9" width="7" height="6" fill="#fff" stroke="#a8b8c8"/></svg>
      <svg viewBox="0 0 16 16"><path d="M5 1l3 1 3-1 5 3-2 3-2-1v9H4V6L2 7 0 4z" fill="#1a78d0"/></svg>
      <svg viewBox="0 0 16 16"><path d="M1 13l7-7c-1-3 2-6 6-5l-3 3 2 2 2-2c1 3-2 7-5 6l-6 6c-1 1-4-1-3-3z" fill="#1a78d0"/></svg>
    </div>
  </div>
  <div class="anno-box"></div>
  <svg class="anno-mark" viewBox="950 560 110 100" width="110" height="100">
    <ellipse cx="1024" cy="598" rx="27" ry="27.500" fill="none" stroke="#e60012" stroke-width="3"/>
    <path d="M1001 625l-35 20" stroke="#e60012" stroke-width="2.500"/>
    <path d="M1006 620l-13 2 5 8zM961 648l13-1-5-8z" fill="#e60012"/>
  </svg>
  <div class="anno-text">这是计算设置中设置箍筋根数为2根</div>
</div>
</body>
</html>
```

FILE: styles.css
```css
*{box-sizing:border-box}
html,body{margin:0;padding:0}
body{width:1366px;height:768px;overflow:hidden;font:12px/16px "Noto Sans CJK SC","Liberation Sans",sans-serif;color:#111;background:#f0f0f0}
.defs{position:absolute}
em{font-style:normal}
i{display:block;font-style:normal}
.app{position:relative;width:1366px;height:768px;display:flex;flex-direction:column;overflow:hidden}
.title{height:23px;background:#fff;display:flex;align-items:center;padding-left:3px;white-space:nowrap;flex:none}
.logo{width:14px;height:14px;margin-right:6px;flex:none}
.title-text{flex:1;overflow:hidden;color:#111;letter-spacing:.1px}
.t-pre{letter-spacing:.45px}
.t-path{letter-spacing:.85px}
.winbtns{display:flex;flex:none;width:137px;background:#fff;height:23px}
.wb{width:45px;display:flex;align-items:center;justify-content:center}
.wb svg{width:12px;height:12px}
.menu{height:31px;background:#fff;display:flex;align-items:center;padding-left:6px;gap:10.700px;white-space:nowrap;flex:none}
.menu-right{margin-left:auto;display:flex;align-items:center;height:31px;background:#f6f6f6}
.qq{width:16px;height:16px;margin-right:3px}
.gxe{margin-right:7px}
.ask{width:186px;height:31px;background:#fbfbfb;color:#5a3000;line-height:31px;padding-left:29px;margin-right:3px}
.userbox{display:flex;align-items:center;gap:4px;width:223px;height:31px;padding-left:5px;background:#f8f8f8}
.userbox .ar{margin:0 6px}
.bell{width:14px;height:18px;margin-left:2px}
.more{font-size:13px;line-height:14px;align-self:flex-start;font-weight:700;margin-top:-1px}
.menu-right>.more{width:17px;padding-left:3px;margin-top:8px}

.ic{width:16px;height:16px;flex:none}
.it{display:inline-flex;align-items:center;gap:3px;white-space:nowrap;flex:none;height:100%}
.ar{width:0;height:0;border:3px solid transparent;border-top:3px solid #222;border-bottom:0;flex:none}
.near{margin-left:-3px}
.sep{width:1px;height:20px;background:#bdbdbd;flex:none}
.tall{height:24px}
.grip{width:3px;height:18px;background:repeating-linear-gradient(#aaa 0 2px,transparent 2px 4px);flex:none}
.tb{display:flex;align-items:center;background:#f7f7f7;height:100%;flex:none}
.off{color:#8a8a8a}
.on{background:#e6f2fb;outline:1px solid #3a8fd0;outline-offset:-1px}

.bar{display:flex;height:28px;flex:none;background:#f0f0f0;padding-bottom:1px}
.tb1a{width:148px;padding-left:6px;gap:6px}
.tb1a .more{margin:5px 0 0 12px}
.tb1a .sep{margin:0 3px 0 1px}
.tb1b{margin-left:4px;width:528px;padding-left:4px;gap:8px}
.sigma{width:16px;text-align:center;font:700 14px "Liberation Serif",serif}
.more1{margin:6px 0 0 10px;width:18px;align-self:auto}
.tb1c{width:661px;gap:7px;padding-left:3px}
.tb1c .ic{width:17px}
.pressed{background:#fff;padding-right:4px;margin-right:-4px}
.tb1c .sep{margin:0 -1px 0 0}
.pushr{margin-left:auto;margin-right:2px;margin-top:5px}

.work{display:flex;height:626px;flex:none;padding-top:2px}
.side{width:198px;flex:none;display:flex;flex-direction:column;margin-right:4px}
.side-head{height:16px;background:#0055e5;color:#fff;display:flex;justify-content:space-between;align-items:center;padding-left:1px;font-size:13px;flex:none}
.side-ctl{display:flex;gap:9px;align-items:center;padding-right:5px}
.side-ctl svg{width:9px;height:11px}
.side-btn{height:22px;background:#f0f0f0;border:1px solid #a0a0a0;font:inherit;color:#111;padding:0;flex:none}
.tree-box{height:516px;flex:none;margin:0 1px 0 2px;border:1px solid #9a9a9a;background:#fff;display:flex;flex-direction:column;overflow:hidden}
.tree-tools{height:27px;flex:none;display:flex;align-items:center;gap:6px;padding-left:5px}
.tree-tools svg{width:16px;height:16px}
.tree-scroll{flex:1;display:flex;min-height:0}
.tree{list-style:none;margin:0;padding:2px 0 0;flex:1;overflow:hidden;font-size:12px}
.tree li{height:16px;display:flex;align-items:center;white-space:nowrap;line-height:16px}
.tree em{font:700 10px/16px "Liberation Mono",monospace}
.node{padding-left:43px;gap:4px;background-repeat:no-repeat;
  background-image:repeating-linear-gradient(#666 0 1px,transparent 1px 2px),repeating-linear-gradient(#666 0 1px,transparent 1px 2px),repeating-linear-gradient(90deg,#666 0 1px,transparent 1px 2px);
  background-size:1px 16px,1px 16px,9px 1px;background-position:12px 0,31px 0,33px 8px}
.lastn{background-size:1px 16px,1px 9px,9px 1px}
.node svg{width:16px;height:16px;flex:none}
.grp{padding-left:7px;gap:0}
.chev{width:10px;height:10px;flex:none;margin-right:6px}
.fo{width:16px;height:16px;flex:none;margin-right:5px}
.vscroll{width:15px;flex:none;margin-right:3px;background:#f0f0f0;display:flex;flex-direction:column;align-items:center;margin-top:-1px}
.sa{width:11px;height:11px;flex:none;margin:2px 0}
.vthumb{width:15px;height:250px;background:#c6c6c6;margin-top:128px;margin-bottom:85px;flex:none}

.main{flex:1;min-width:0;display:flex;flex-direction:column;padding-bottom:3px}
.tb-row{display:flex;flex:none}
.row2{height:26px;margin-bottom:2px;padding-left:3px}
.row2 .tb{gap:8px;padding-right:5px}
.row2 .sep{margin:0 -2px}
.row3{height:26px;margin-bottom:2px;justify-content:space-between;width:1164px}
.r3a{padding-left:8px;gap:3px;padding-right:5px}
.r3a .sep{margin:0 2px 0 3px}
.r3a .it.on{padding:0 5px 0 3px;margin-right:2px}
.gapl{margin-left:5px}
.r3b{width:421px;margin-right:102px;padding-left:5px;gap:7px}
.r3b .grip{margin-right:-5px}
.combo{display:flex;align-items:center;justify-content:space-between;background:#fff;height:24px;padding:0 3px;flex:none;white-space:nowrap}
.c58{width:58px}.c69{width:69px}.c57{width:57px}
.row4{height:25px;margin-bottom:1px}
.row4 .tb{gap:7px;padding-left:3px}
.row4 .sep{margin:0 -1px}
.row4 .sel{padding:0 2px 0 4px;margin:0 -3px 0 -5px}
.m2{margin-left:2px}
.g-end{margin-left:3px}
.blank{width:24px;height:23px;background:#fff;margin-left:-6px}
.canvas{display:block;flex:none;width:1164px;height:307px}
.cad-axis text{font:14px "Liberation Sans",sans-serif;text-anchor:middle}
.cad-dim text{font:15px "Liberation Sans",sans-serif;text-anchor:middle;letter-spacing:.6px}
.cad-small text{font-family:"Noto Sans CJK SC",sans-serif;font-size:7px;fill:#707088;text-anchor:middle}

.row5{height:27px;margin-top:2px;margin-bottom:5px}
.row5 .tb{gap:5px;padding-left:3px;padding-right:5px}
.row5 .grip{margin:0 -1px 0 2px}
.row5 .g-third{margin:0 -3px 0 5px}
.row5 .sep{margin-right:-3px}
.tg-wrap{display:flex;height:24px;flex:none;margin-left:-1px}
.tg-wrap .it{padding:0 3px;gap:5px}
.row5 .tb>.it{height:24px}
.lbl{color:#777;flex:none}
.spin{position:relative;height:22px;border:1px solid #a8a8a8;background:#fff;color:#777;display:flex;align-items:center;justify-content:flex-end;padding-right:16px;flex:none}
.s58{width:57px;margin-right:-4px}.s68{width:67px}
.arrows{position:absolute;right:3px;top:3px;display:flex;flex-direction:column;gap:5px}
.arrows i{width:0;height:0;border:3px solid transparent}
.arrows .up{border-bottom:3px solid #555;border-top:0}
.arrows .dn{border-top:3px solid #555;border-bottom:0}
.check{width:11px;height:11px;border:1px solid #888;background:#fff;flex:none}
.rot-l{margin:0 -3px 0 5px;flex:none}

.lower{flex:1;display:flex;min-height:0}
.lower-grip{width:12px;flex:none;padding:0 0 0 2px;display:flex;flex-direction:column}
.closex{width:10px;height:10px;flex:none}
.dots{flex:1;width:7px;margin:1px 0 0;background-image:radial-gradient(#bbb 1px,transparent 1px);background-size:3.500px 4px}
.lower-body{width:1150px;border:1px solid #b8b8b8;border-width:0 1px 1px 0;display:flex;flex-direction:column;background:#fff}
.grid-bar{height:25px;flex:none;display:flex;align-items:center;background:#fff;gap:7px;padding-left:5px;white-space:nowrap}
.grid-bar .n{margin-right:3.500px;width:14px}
.grid-bar .n:nth-child(4){margin-right:0}
.grid-bar .sep{margin:0 1px 0 -2px}
.grid-bar .plain{flex:none}
.rebar{border-collapse:collapse;table-layout:fixed;width:1149px;flex:none;font-size:12px;line-height:14px;background:#fff}
.rebar th,.rebar td{border:1px solid #bdbdbd;padding:0 0 0 2px;font-weight:400;overflow:hidden;white-space:nowrap}
.rebar em{font:10.500px/14px "Liberation Sans",sans-serif;letter-spacing:.3px}
.rebar .f1 em{letter-spacing:-.5px}
.rebar .two em{letter-spacing:1.200px;line-height:13px}
.rebar thead em{font-size:11px;letter-spacing:-.2px}
.c1{width:34px}.c2{width:73px}.c3{width:56px}.c4{width:36px}.c5{width:33px}.c6{width:201px}.c7{width:167px}.c8{width:155px}.c9{width:61px}.c10{width:182px}.c11{width:39px}.c12{width:50px}.c13{width:62px}
.rebar thead th{height:21px;background:linear-gradient(#fff,#f1f1f1);text-align:center}
.rebar thead .hot{background:linear-gradient(#fadfae,#f1bd6e);color:#5a1a8a}
.rebar tbody th{background:linear-gradient(#fdfdfd,#eeeeee);text-align:center;padding:0 6px 0 0}
.rebar tbody .cur{background:#ffd18c;color:#5a1a8a}
.r1 td,.r2 td{background:#c9fdd3}
.r1{height:34px}.r2{height:34px}.r3{height:19px}
.r3 td{background:#fff}
.rebar td.bl{border-left:1px solid #000}
.ctr{text-align:center;padding:0!important}
.grade{display:inline-block;font-size:11px;line-height:11px;border-bottom:1px solid #111;padding:0 1px}
.rebar .desc{line-height:15px}
.rebar td.shape{padding:0}
.shape1,.shape2{position:relative;height:32px}
.n200{position:absolute;left:9px;top:9px;font:11px/14px "Liberation Sans",sans-serif}
.el{position:absolute;left:33px;top:10px;width:139px;height:14px;border-left:2px solid #000;border-bottom:2px solid #000}
.rd{font:11px/14px "Liberation Sans",sans-serif;color:#f00}
.el .rd{position:absolute;left:50px;top:-6px}
.n190{position:absolute;left:55px;top:11px;font:11px/14px "Liberation Sans",sans-serif}
.stir{position:absolute;left:82px;top:7px;width:35px;height:22px;border:2px solid #000}
.stir .rd{position:absolute;left:1px;top:4px}
.stir .h1,.stir .h2{position:absolute;width:2px;height:9px;background:#000;transform:rotate(40deg)}
.h1{right:9px;top:-2px}
.h2{right:3px;top:3px;height:13px!important}
.rebar td.editing{background:#e3fde7;padding:0}
.edit-wrap{display:flex;align-items:flex-start;height:32px;padding:2px 1px 0 2px;justify-content:space-between}
.selected{background:#0a6fd8;color:#fff;font:10.500px/14px "Liberation Sans",sans-serif;letter-spacing:1px;margin-top:1px}
.dots3{width:15px;height:30px;background:#dcdcdc;border:1px solid #b8b8b8;font:700 12px/10px "Liberation Sans",sans-serif;padding:0;margin-top:-1px;color:#111}
.table-fill{flex:1;background:#fff}
.hscroll{height:16px;flex:none;background:#f0f0f0;display:flex;align-items:center}
.hscroll svg{width:11px;height:11px;flex:none;margin:0 4px}
.hthumb{width:678px;height:16px;background:#c8c8c8;margin-right:auto}

.status{height:20px;flex:none;display:flex;gap:3px;background:#f0f0f0;white-space:nowrap}
.st{border:1px solid #d4d4d4;background:linear-gradient(#fff,#f6f6f6);line-height:18px;padding-left:2px;flex:none;overflow:hidden}
.status em{font:11px/18px "Liberation Mono",monospace}
.s1{width:147px;font:10px/18px "Liberation Mono",monospace}
.s2{width:77px}.s3{width:97px}.s4{width:48px}.s5{width:913px;padding-left:1px}.s6{width:70px;font:10px/18px "Liberation Mono",monospace}

.taskbar{height:40px;flex:none;background:#03090f;display:flex;color:#fff;align-items:stretch}
.start{width:48px;background:#000;display:flex;align-items:center;justify-content:center}
.start svg{width:16px;height:16px}
.search{width:344px;background:#333;display:flex;align-items:center;padding-left:10px;color:#9a9a9a;font-size:13px}
.ring{width:20px;height:20px;border:2px solid #e8e8e8;border-radius:50%;margin-right:6px;box-shadow:inset 0 0 2px #888}
.search svg{width:12px;height:18px;margin-left:113px}
.apps{display:grid;grid-template-columns:repeat(11,49.600px);width:546px}
.app-b{display:flex;align-items:center;justify-content:center;border-bottom:2px solid transparent}
.app-b svg{width:24px;height:24px}
.app-b:first-child svg{width:22px;height:20px}
.u{border-bottom-color:#76b9ed;margin:0 4px}
.active{background:#2d3a44;margin:0}
.tray{flex:1;display:flex;align-items:center;padding-left:47px;position:relative}
.cpu{width:64px;text-align:center;display:flex;flex-direction:column;font-size:12px;line-height:18px;flex:none;margin-right:10px}
.t-caret{width:12px;height:12px;margin-right:9px}
.t-i{width:15px;height:15px;margin-right:7px}
.t-k{width:22px;height:16px;margin:0 7px 0 4px}
.t-a{font:700 16px "Liberation Sans",sans-serif;margin-right:13px}
.t-s{width:16px;height:18px;margin-right:23px}
.clock{display:flex;flex-direction:column;align-items:flex-end;width:66px;line-height:18px;font-size:13px;flex:none}
.notif{position:absolute;right:14px;top:10px;width:24px;height:24px}
.notif svg{width:16px;height:16px}
.notif b{position:absolute;left:4px;top:6px;width:22px;height:16px;background:#444;border-radius:8px;font:700 11px/16px "Liberation Sans",sans-serif;text-align:center;border:1px solid #bbb}

.speed{position:absolute;left:750px;top:6px;width:126px;height:44px}
.gauge{position:absolute;left:0;top:0;width:44px;height:44px;border-radius:50%;background:radial-gradient(circle at 50% 15%,#bfe8c0 0,#3db25a 25%,#1a8a44 100%);border:3px solid #d8d8d8;color:#fff;text-align:center;line-height:38px;font-size:13px;z-index:1;box-shadow:0 0 2px #666}
.speed-r{position:absolute;left:24px;top:4px;width:102px;height:39px;border-radius:0 19px 19px 0;background:linear-gradient(#fff,#dcdcdc);box-shadow:0 1px 3px #777;display:grid;grid-template-columns:38px 33px;grid-auto-rows:15px;align-content:center;justify-content:start;font-size:10px;line-height:15px}
.sp{display:flex;justify-content:flex-end;align-items:center;padding-right:6px}
.sv{font:10px/15px "Liberation Sans",sans-serif;text-align:right;color:#222}
.tup{width:0;height:0;border:3px solid transparent;border-bottom:6px solid #e0504a;border-top:0}
.tdn{width:0;height:0;border:3px solid transparent;border-top:6px solid #3aa050;border-bottom:0}
.plus{position:absolute;left:100px;top:16px;width:17px;height:17px;border-radius:50%;background:#3b7fd8;color:#fff;text-align:center;font:700 14px/16px "Liberation Sans",sans-serif}
.reddot{position:absolute;left:113px;top:13px;width:7px;height:7px;border-radius:50%;background:#e03030}
.sogou{position:absolute;left:868px;top:0;display:flex;align-items:flex-start}
.s-logo{width:28px;height:28px;flex:none}
.s-bar{width:156px;height:23px;margin-top:3px;background:#f4f8fc;border:1px solid #bcd;border-left:0;display:flex;align-items:center;padding-left:7px;gap:7px}
.s-bar svg{width:15px;height:15px;flex:none}
.s-a{font:700 18px "Liberation Sans",sans-serif;color:#1a78d0;width:16px;margin-right:2px;text-align:center}
.anno-box{position:absolute;left:756px;top:516px;width:218px;height:74px;border:8px solid #ff0000}
.anno-mark{position:absolute;left:950px;top:560px}
.anno-text{position:absolute;left:925px;top:642px;font:700 21px/26px "Noto Sans CJK SC",sans-serif;color:#ee1111;letter-spacing:1.800px;white-space:nowrap}
```
